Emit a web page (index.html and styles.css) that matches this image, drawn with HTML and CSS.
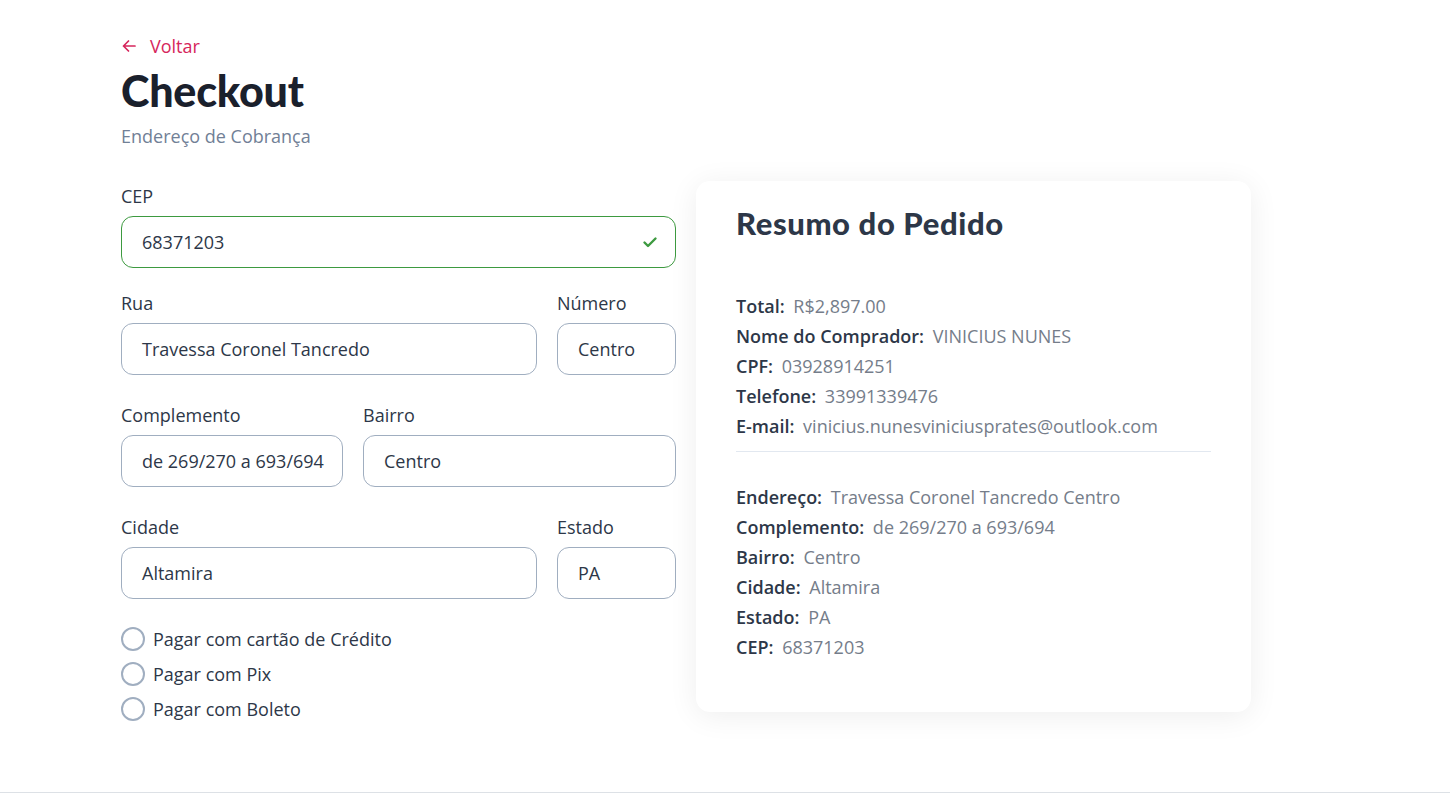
FILE: index.html
```html
<!DOCTYPE html>
<html lang="pt-BR">
<head>
<meta charset="utf-8">
<title>Checkout</title>
<link rel="stylesheet" href="styles.css">
</head>
<body>
<main class="page">
  <a class="back" href="#">
    <svg class="back-icon" viewBox="0 0 16 16" width="16" height="16" aria-hidden="true"><path d="M14 8H2.5M7.5 3L2.5 8l5 5" fill="none" stroke="currentColor" stroke-width="1.7" stroke-linecap="round" stroke-linejoin="round"/></svg>
    <span>Voltar</span>
  </a>
  <h1 class="title">Checkout</h1>
  <p class="subtitle">Endereço de Cobrança</p>

  <div class="columns">
    <form class="form">
      <div class="row first">
        <div class="field grow">
          <label class="label">CEP</label>
          <div class="input valid">
            <span>68371203</span>
            <svg class="check" viewBox="0 0 16 16" width="16" height="16" aria-hidden="true"><path d="M2.5 8.5l3.5 3.5 7.5-7.5" fill="none" stroke="currentColor" stroke-width="2.4" stroke-linecap="round" stroke-linejoin="round"/></svg>
          </div>
        </div>
      </div>
      <div class="row">
        <div class="field grow">
          <label class="label">Rua</label>
          <div class="input">Travessa Coronel Tancredo</div>
        </div>
        <div class="field small">
          <label class="label">Número</label>
          <div class="input">Centro</div>
        </div>
      </div>
      <div class="row">
        <div class="field comp">
          <label class="label">Complemento</label>
          <div class="input">de 269/270 a 693/694</div>
        </div>
        <div class="field grow">
          <label class="label">Bairro</label>
          <div class="input">Centro</div>
        </div>
      </div>
      <div class="row">
        <div class="field grow">
          <label class="label">Cidade</label>
          <div class="input">Altamira</div>
        </div>
        <div class="field small">
          <label class="label">Estado</label>
          <div class="input">PA</div>
        </div>
      </div>
      <div class="radios">
        <label class="radio"><span class="circle"></span>Pagar com cartão de Crédito</label>
        <label class="radio"><span class="circle"></span>Pagar com Pix</label>
        <label class="radio"><span class="circle"></span>Pagar com Boleto</label>
      </div>
    </form>

    <aside class="card">
      <h2 class="card-title">Resumo do Pedido</h2>
      <ul class="info">
        <li><b>Total:</b> R$2,897.00</li>
        <li><b>Nome do Comprador:</b> VINICIUS NUNES</li>
        <li><b>CPF:</b> 03928914251</li>
        <li><b>Telefone:</b> 33991339476</li>
        <li><b>E-mail:</b> vinicius.nunesviniciusprates@outlook.com</li>
      </ul>
      <hr class="divider">
      <ul class="info">
        <li><b>Endereço:</b> Travessa Coronel Tancredo Centro</li>
        <li><b>Complemento:</b> de 269/270 a 693/694</li>
        <li><b>Bairro:</b> Centro</li>
        <li><b>Cidade:</b> Altamira</li>
        <li><b>Estado:</b> PA</li>
        <li><b>CEP:</b> 68371203</li>
      </ul>
    </aside>
  </div>
</main>
<footer class="footer"></footer>
</body>
</html>
```

FILE: styles.css
```css
* { box-sizing: border-box; }
html, body { margin: 0; padding: 0; }
body {
  font-family: "Open Sans", Lato, sans-serif;
  color: #2d3748;
  background: #fff;
  height: 793px;
  display: flex;
  flex-direction: column;
}
.page {
  flex: 1;
  padding: 34px 0 0 121px;
}
.back {
  display: inline-flex;
  align-items: center;
  gap: 13px;
  color: #d6265c;
  text-decoration: none;
  font-size: 18px;
  line-height: 24px;
}
.back-icon { width: 16px; height: 16px; }
.title {
  margin: 8px 0 0;
  font-family: Lato, sans-serif;
  font-size: 43px;
  line-height: 48px;
  font-weight: 900;
  color: #1a202c;
  letter-spacing: -0.2px;
}
.subtitle {
  margin: 9px 0 0;
  font-size: 18px;
  line-height: 24px;
  color: #718096;
}
.columns {
  display: flex;
  gap: 20px;
  margin-top: 36px;
  align-items: flex-start;
}
.form { width: 555px; }
.row {
  display: flex;
  gap: 20px;
  margin-bottom: 28px;
}
.row.first { margin-bottom: 23px; }
.field { display: flex; flex-direction: column; }
.grow { flex: 1; }
.small { width: 119px; }
.comp { width: 222px; }
.label {
  font-size: 18px;
  line-height: 24px;
  margin-bottom: 8px;
  color: #2d3748;
}
.input {
  height: 52px;
  border: 1px solid #a0aec0;
  border-radius: 12px;
  padding: 0 20px;
  display: flex;
  align-items: center;
  justify-content: space-between;
  font-size: 18px;
  color: #2d3748;
  white-space: nowrap;
  overflow: hidden;
}
.input.valid { border-color: #3d9a40; }
.check { color: #3d9a40; margin-right: -3px; flex: none; }
.radios {
  display: flex;
  flex-direction: column;
  gap: 11px;
}
.radio {
  display: flex;
  align-items: center;
  gap: 8px;
  font-size: 18px;
  line-height: 24px;
  color: #2d3748;
}
.circle {
  width: 24px;
  height: 24px;
  border: 2px solid #a0aec0;
  border-radius: 50%;
}
.card {
  width: 555px;
  margin-top: -3px;
  background: #fff;
  border-radius: 14px;
  box-shadow: 0 4px 30px rgba(0, 0, 0, 0.07);
  padding: 22px 40px 50px;
}
.card-title {
  margin: 0 0 48px;
  font-family: Lato, sans-serif;
  font-size: 31px;
  line-height: 40px;
  font-weight: 900;
  letter-spacing: 0.6px;
  color: #2d3748;
}
.info {
  list-style: none;
  margin: 0;
  padding: 0;
  font-size: 18px;
  line-height: 30px;
  color: #757d8a;
}
.info b { color: #2d3748; font-weight: 600; margin-right: 4px; }
.divider {
  border: 0;
  border-top: 1px solid #e2e8f0;
  margin: 10px 0 30px;
}
.footer {
  height: 1px;
  background: #dde1e6;
}
```
